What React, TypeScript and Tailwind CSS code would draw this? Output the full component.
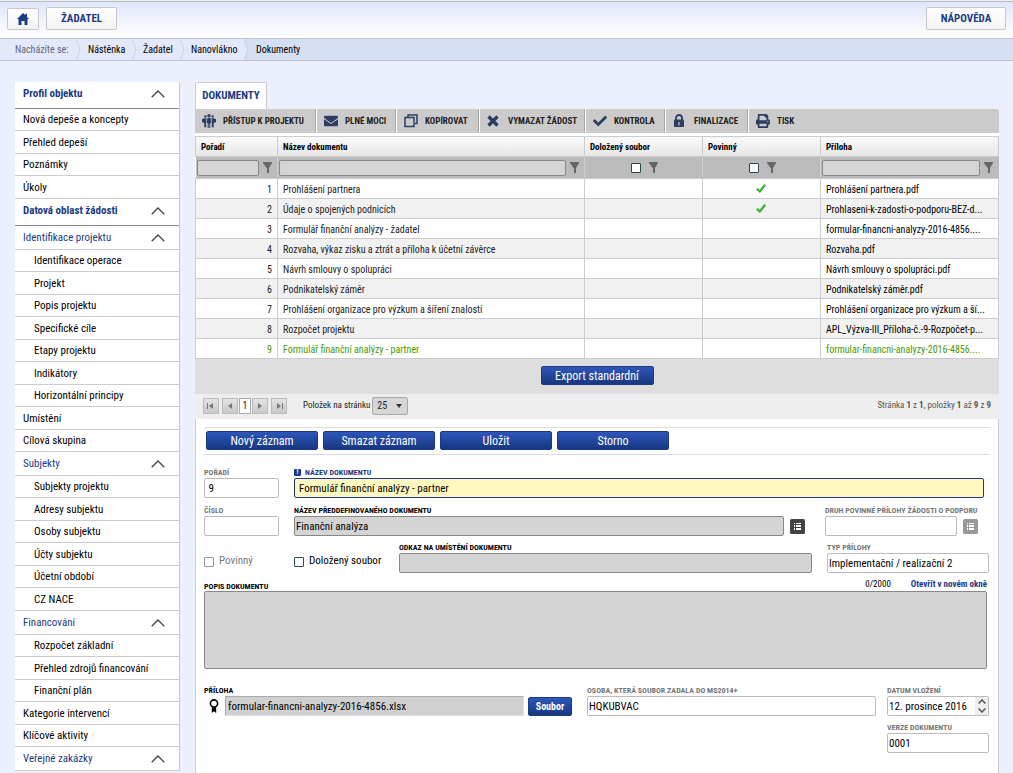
import type { ReactNode } from "react";
import clsx from "clsx";
import { FaCheck, FaEnvelope, FaPrint } from "react-icons/fa";

type MenuItem = { label: string; child?: boolean };
type MenuGroup = { title: string; main?: boolean; items: MenuItem[] };

const sub = (label: string): MenuItem => ({ label, child: true });

const menu: MenuGroup[] = [
  {
    title: "Profil objektu",
    main: true,
    items: [{ label: "Nová depeše a koncepty" }, { label: "Přehled depeší" }, { label: "Poznámky" }, { label: "Úkoly" }],
  },
  { title: "Datová oblast žádosti", main: true, items: [] },
  {
    title: "Identifikace projektu",
    items: [
      sub("Identifikace operace"),
      sub("Projekt"),
      sub("Popis projektu"),
      sub("Specifické cíle"),
      sub("Etapy projektu"),
      sub("Indikátory"),
      sub("Horizontální principy"),
      { label: "Umístění" },
      { label: "Cílová skupina" },
    ],
  },
  {
    title: "Subjekty",
    items: [
      sub("Subjekty projektu"),
      sub("Adresy subjektu"),
      sub("Osoby subjektu"),
      sub("Účty subjektu"),
      sub("Účetní období"),
      sub("CZ NACE"),
    ],
  },
  {
    title: "Financování",
    items: [
      sub("Rozpočet základní"),
      sub("Přehled zdrojů financování"),
      sub("Finanční plán"),
      { label: "Kategorie intervencí" },
      { label: "Klíčové aktivity" },
    ],
  },
  { title: "Veřejné zakázky", items: [] },
];

const rows = [
  { name: "Prohlášení partnera", required: true, file: "Prohlášení partnera.pdf" },
  { name: "Údaje o spojených podnicích", required: true, file: "Prohlaseni-k-zadosti-o-podporu-BEZ-d..." },
  { name: "Formulář finanční analýzy - žadatel", file: "formular-financni-analyzy-2016-4856...." },
  { name: "Rozvaha, výkaz zisku a ztrát a příloha k účetní závěrce", file: "Rozvaha.pdf" },
  { name: "Návrh smlouvy o spolupráci", file: "Návrh smlouvy o spolupráci.pdf" },
  { name: "Podnikatelský záměr", file: "Podnikatelský záměr.pdf" },
  { name: "Prohlášení organizace pro výzkum a šíření znalostí", file: "Prohlášení organizace pro výzkum a ší..." },
  { name: "Rozpočet projektu", file: "APL_Výzva-III_Příloha-č.-9-Rozpočet-p..." },
  { name: "Formulář finanční analýzy - partner", file: "formular-financni-analyzy-2016-4856....", active: true },
];

function PeopleIcon() {
  return (
    <svg viewBox="0 0 14 14" className="h-[14px] w-[14px]" fill="currentColor">
      <circle cx="7" cy="1.8" r="1.7" />
      <circle cx="3.4" cy="2.4" r="1.2" />
      <circle cx="10.6" cy="2.4" r="1.2" />
      <path d="M5.300 4h3.400l.4 5h-.8v5h-1v-4h-.6v4h-1V9h-.8z" />
      <path d="M2 4.200h2.500L4.200 9v4.300H2.300V9L.9 8.400 0 8V5.200zM12 4.200H9.500L9.800 9v4.300h1.900V9l1.400-.6.9-.4V5.200z" />
    </svg>
  );
}

function CopyIcon() {
  return (
    <svg viewBox="0 0 14 14" className="h-[14px] w-[14px]" fill="none" stroke="currentColor" strokeWidth="1.500">
      <path d="M4 3.500V1h9v8.500h-2.500" />
      <rect x="1" y="3.500" width="9" height="9" />
    </svg>
  );
}

function CrossIcon() {
  return (
    <svg viewBox="0 0 12 12" className="h-3 w-3" fill="none" stroke="currentColor" strokeWidth="3.400">
      <path d="m1.500 1.500 9 9M10.500 1.500l-9 9" />
    </svg>
  );
}

function LockIcon() {
  return (
    <svg viewBox="0 0 12 14" className="h-[14px] w-3" fill="currentColor">
      <path d="M3 6V4a3 3 0 0 1 6 0v2" fill="none" stroke="currentColor" strokeWidth="1.800" />
      <rect x="1" y="5.500" width="10" height="7.500" rx="1" />
      <path d="M5.400 8h1.200v3.500H5.400z" fill="#cbcbcb" />
    </svg>
  );
}

function HomeIcon() {
  return (
    <svg viewBox="0 0 12 12" className="h-3 w-3" fill="currentColor">
      <path d="M6 0 0 6h1.500v6h3V8h3v4h3V6H12l-2-2V.8H8.300v1.500z" />
    </svg>
  );
}

function Funnel() {
  return (
    <svg viewBox="0 0 9 11" className="h-[11px] w-[9px] shrink-0" fill="#666">
      <path d="M0 0h9v1L6 6v5H4V6.500L0 1z" />
    </svg>
  );
}

function GreenCheck() {
  return (
    <svg viewBox="0 0 10 9" className="mx-auto h-[9px] w-[10px]" fill="none" stroke="#2fb52f" strokeWidth="2.200">
      <path d="m.8 4.800 3 2.700 5.400-6.700" />
    </svg>
  );
}

function Chevron() {
  return (
    <svg viewBox="0 0 14 8" className="h-2 w-[14px]" fill="none" stroke="#444" strokeWidth="1.300">
      <path d="M.7 7.300 7 1l6.300 6.300" />
    </svg>
  );
}

function ListIcon() {
  return (
    <svg viewBox="0 0 15 15" className="h-[15px] w-[15px]" fill="currentColor">
      <rect width="15" height="15" rx="1.500" />
      <path fill="#fff" d="M4 4h1v1H4zM6 4h5v1H6zM4 6h1v2H4zM6 6h5v2H6zM4 9h1v2H4zM6 9h5v2H6z" />
    </svg>
  );
}

function RibbonIcon() {
  return (
    <svg viewBox="0 0 10 14" className="h-[14px] w-[10px]">
      <circle cx="5" cy="4.500" r="3.600" fill="none" stroke="#000" strokeWidth="1.600" />
      <path d="M2.800 8.300h4.400V14L5 12.200 2.800 14z" />
    </svg>
  );
}

const tools: { label: string; icon: ReactNode; width: string }[] = [
  { label: "PŘÍSTUP K PROJEKTU", icon: <PeopleIcon />, width: "w-[122px]" },
  { label: "PLNÉ MOCI", icon: <FaEnvelope size={14} />, width: "w-20" },
  { label: "KOPÍROVAT", icon: <CopyIcon />, width: "w-[83px]" },
  { label: "VYMAZAT ŽÁDOST", icon: <CrossIcon />, width: "w-[106px]" },
  { label: "KONTROLA", icon: <FaCheck size={14} />, width: "w-20" },
  { label: "FINALIZACE", icon: <LockIcon />, width: "w-[83px]" },
  { label: "TISK", icon: <FaPrint size={14} />, width: "w-20" },
];

function Sidebar() {
  return (
    <nav className="w-[165px] shrink-0 self-start border-r border-[#c8cad0] bg-white text-[11px]">
      {menu.map((group) => (
        <section key={group.title}>
          <button
            className={clsx(
              "flex w-full items-center justify-between border-b pr-[14px] pl-2 text-[#1b3a85]",
              group.main ? "h-[27px] border-[#888] pb-[2px] font-bold" : "h-6 border-[#ccc] pt-px"
            )}
          >
            {group.title}
            <Chevron />
          </button>
          <ul>
            {group.items.map((item) => (
              <li key={item.label} className="h-[22px] border-b border-[#ccc] even:h-[23px]">
                <a href="#" className={clsx("flex h-full items-center pt-[2px] text-black", item.child ? "pl-[19px]" : "pl-2")}>
                  {item.label}
                </a>
              </li>
            ))}
          </ul>
        </section>
      ))}
    </nav>
  );
}

function TextFilter({ label }: { label: string }) {
  return (
    <div className="flex items-center gap-1 pr-[5px] pl-px">
      <input aria-label={label} className="h-4 w-full min-w-0 rounded-[2px] border border-[#888] bg-[#d4d4d4]" />
      <Funnel />
    </div>
  );
}

function BoxFilter({ label }: { label: string }) {
  return (
    <div className="flex items-center justify-center gap-2 pl-[2px]">
      <CheckBox label={label} />
      <Funnel />
    </div>
  );
}

function CheckBox({ id, label, muted }: { id?: string; label?: string; muted?: boolean }) {
  return (
    <input
      id={id}
      aria-label={label}
      type="checkbox"
      className={clsx(
        "h-[10px] w-[10px] shrink-0 appearance-none rounded-[1px] border bg-white",
        muted ? "border-[#8a9a9c]" : "border-[#2a4a50]"
      )}
    />
  );
}

function DocumentsTable() {
  return (
    <table className="w-full table-fixed border-collapse text-[10px] text-[#222]">
      <colgroup>
        <col className="w-[82px]" />
        <col />
        <col className="w-[118px]" />
        <col className="w-[118px]" />
        <col className="w-[178px]" />
      </colgroup>
      <thead>
        <tr className="h-5 bg-linear-to-b from-[#fafafa] to-[#e6e6e6] text-left text-[9px] text-black">
          {["Pořadí", "Název dokumentu", "Doložený soubor", "Povinný", "Příloha"].map((head) => (
            <th key={head} className="border border-[#ccc] px-[5px] pt-[2px] pb-0 font-bold">
              {head}
            </th>
          ))}
        </tr>
        <tr className="h-[22px] bg-[#bbb]">
          <td className="border-r border-[#ccc] p-0"><TextFilter label="Filtr pořadí" /></td>
          <td className="border-r border-[#ccc] p-0"><TextFilter label="Filtr názvu" /></td>
          <td className="border-r border-[#ccc] p-0"><BoxFilter label="Filtr doložený soubor" /></td>
          <td className="border-r border-[#ccc] p-0"><BoxFilter label="Filtr povinný" /></td>
          <td className="p-0 pr-px"><TextFilter label="Filtr přílohy" /></td>
        </tr>
      </thead>
      <tbody>
        {rows.map((row, i) => (
          <tr
            key={row.name}
            className={clsx("h-5 leading-4", i % 2 ? "bg-[#f1f1f1]" : "bg-white", row.active ? "text-[#4c9a00]" : "text-[#222]")}
          >
            <td className="border border-[#ccc] px-[5px] pt-[2px] pb-0 text-right">{i + 1}</td>
            <td className="border border-[#ccc] px-[5px] pt-[2px] pb-0">{row.name}</td>
            <td className="border border-[#ccc] p-0" />
            <td className="border border-[#ccc] p-0 pr-[2px]">{row.required && <GreenCheck />}</td>
            <td
              className={clsx(
                "overflow-hidden border border-[#ccc] px-[5px] pt-[2px] pb-0 whitespace-nowrap",
                !row.active && "text-black"
              )}
            >
              {row.file}
            </td>
          </tr>
        ))}
      </tbody>
    </table>
  );
}

function PageButton({ label, first, last, next }: { label: string; first?: boolean; last?: boolean; next?: boolean }) {
  return (
    <button
      aria-label={label}
      className="flex h-4 w-4 items-center justify-center border border-[#bbb] bg-linear-to-b from-[#e4e4e4] to-[#c8c8c8]"
    >
      <svg viewBox="0 0 8 8" className="h-2 w-2" fill="#777">
        {first && <path d="M0 1h1v6H0z" />}
        {last && <path d="M7 1h1v6H7z" />}
        <path d={next ? "M2 1l4 3-4 3z" : "M6 1 2 4l4 3z"} />
      </svg>
    </button>
  );
}

function Pager() {
  return (
    <div className="flex h-[25px] items-center justify-between bg-[#eee] pr-2 pb-px pl-2 text-[9px] text-[#222]">
      <div className="flex items-center">
        <div className="flex items-center gap-[3px]">
          <PageButton label="První" first />
          <div className="flex gap-px">
            <PageButton label="Předchozí" />
            <button className="h-4 w-3 border border-[#aaa] bg-white text-[10px] leading-3">1</button>
            <PageButton label="Další" next />
          </div>
          <PageButton label="Poslední" last next />
        </div>
        <label htmlFor="page-size" className="ml-4">
          Položek na stránku
        </label>
        <div className="relative ml-[2px]">
          <select
            id="page-size"
            className="h-[18px] w-9 appearance-none rounded-[2px] border border-[#aaa] bg-[#d6d6d6] pl-1 text-[10px] leading-3"
          >
            <option>25</option>
          </select>
          <span className="pointer-events-none absolute top-[7px] right-[6px] border-x-[3px] border-t-4 border-x-transparent border-t-[#333]" />
        </div>
      </div>
      <p className="text-[#555]">
        Stránka <b>1</b> z <b>1</b>, položky <b>1</b> až <b>9</b> z <b>9</b>
      </p>
    </div>
  );
}

type FieldProps = {
  id: string;
  label: string;
  value?: string;
  kind?: "plain" | "filled" | "required" | "file";
  muted?: boolean;
  className?: string;
  after?: ReactNode;
};

const kinds = {
  plain: "rounded-[2px] border border-[#bbb] bg-white px-px",
  filled: "rounded-[2px] border border-[#888] bg-[#d4d4d4] px-px",
  required: "rounded-[2px] border border-[#1b3a85] bg-[#fff8bf] px-1",
  file: "border border-[#aaa] border-r-[#e0e0e0] border-b-[#e0e0e0] bg-[#d0d0d0] px-[2px]",
};

function Field({ id, label, value, kind = "plain", muted, className, after }: FieldProps) {
  return (
    <div className={className}>
      <label
        htmlFor={id}
        className={clsx(
          "flex h-[11px] items-center gap-1 text-[8px] font-bold whitespace-nowrap",
          kind === "required" ? "text-[#1b3a85]" : muted ? "text-[#777]" : "text-black"
        )}
      >
        {kind === "required" && (
          <span className="flex h-[7px] w-[7px] items-center justify-center rounded-[1px] bg-[#1b3a85] text-[7px] leading-none text-white">!</span>
        )}
        {label}
      </label>
      <div className="flex items-center gap-[6px]">
        <input id={id} defaultValue={value} className={clsx("h-5 w-full min-w-0 text-[11px] text-black", kinds[kind])} />
        {after}
      </div>
    </div>
  );
}

const blueButton =
  "rounded-[2px] border border-[#1b3a85] bg-linear-to-b from-[#2d57bb] to-[#183780] text-white";

function DocumentForm() {
  return (
    <form className="flex-1 border-x border-[#ccc] bg-white pt-2 pr-2 pl-2" onSubmit={(e) => e.preventDefault()}>
      <div className="flex h-7 items-center gap-[5px] border-y border-[#ddd] pb-px pl-[2px]">
        {["Nový záznam", "Smazat záznam", "Uložit", "Storno"].map((label) => (
          <button key={label} className={clsx("h-[19px] w-28 pt-px text-[12px] leading-4", blueButton)}>
            {label}
          </button>
        ))}
      </div>

      <div className="mt-3 flex gap-[15px] pr-[6px]">
        <Field id="order" label="POŘADÍ" value=" 9" muted className="w-[75px]" />
        <Field id="name" label="NÁZEV DOKUMENTU" value="Formulář finanční analýzy - partner" kind="required" className="flex-1" />
      </div>

      <div className="mt-[7px] flex pr-3">
        <Field id="number" label="ČÍSLO" muted className="w-[75px]" />
        <Field
          id="template"
          label="NÁZEV PŘEDDEFINOVANÉHO DOKUMENTU"
          value="Finanční analýza"
          kind="filled"
          className="ml-[15px] flex-1"
          after={<button type="button" aria-label="Vybrat dokument" className="text-[#444]"><ListIcon /></button>}
        />
        <Field
          id="attachment-kind"
          label="DRUH POVINNÉ PŘÍLOHY ŽÁDOSTI O PODPORU"
          muted
          className="ml-5 w-[153px]"
          after={<button type="button" aria-label="Vybrat druh přílohy" className="text-[#999]"><ListIcon /></button>}
        />
      </div>

      <div className="mt-[6px] flex pr-px text-[11px]">
        <div className="mt-2 flex w-[90px] items-center gap-[5px] text-[#777]">
          <CheckBox id="mandatory" muted />
          <label htmlFor="mandatory">Povinný</label>
        </div>
        <div className="mt-2 flex w-[105px] items-center gap-[5px] text-black">
          <CheckBox id="supplied" />
          <label htmlFor="supplied">Doložený soubor</label>
        </div>
        <Field id="location" label="ODKAZ NA UMÍSTĚNÍ DOKUMENTU" kind="filled" className="flex-1" />
        <Field id="type" label="TYP PŘÍLOHY" value="Implementační / realizační 2" muted className="ml-[15px] w-[162px]" />
      </div>

      <div className="mt-[5px] pr-[3px]">
        <div className="flex h-[13px] items-center">
          <label htmlFor="description" className="mt-1 flex-1 text-[8px] font-bold text-black">
            POPIS DOKUMENTU
          </label>
          <span className="mr-5 text-[9px] text-black">0/2000</span>
          <a href="#" className="text-[9px] font-bold text-[#1b3a85]">
            Otevřít v novém okně
          </a>
        </div>
        <textarea id="description" className="block h-[78px] w-full resize-none rounded-[2px] border border-[#888] bg-[#d4d4d4]" />
      </div>

      <div className="mt-4 flex pr-px">
        <div className="mr-[15px] w-[368px]">
          <label htmlFor="file" className="flex h-[11px] items-center text-[8px] font-bold text-black">
            PŘÍLOHA
          </label>
          <div className="flex items-center pl-[5px]">
            <RibbonIcon />
            <input
              id="file"
              defaultValue="formular-financni-analyzy-2016-4856.xlsx"
              className={clsx("ml-[6px] h-5 min-w-0 flex-1 text-[11px] text-black", kinds.file)}
            />
            <button className={clsx("ml-1 h-[19px] w-11 pt-px text-[10px] leading-4 font-bold", blueButton)}>Soubor</button>
          </div>
        </div>
        <Field id="person" label="OSOBA, KTERÁ SOUBOR ZADALA DO MS2014+" value="HQKUBVAC" muted className="flex-1" />
        <div className="ml-[11px] flex w-[102px] flex-col gap-[6px]">
          <div className="relative">
            <Field id="date" label="DATUM VLOŽENÍ" value="12. prosince 2016" muted />
            <div className="absolute right-px bottom-px flex h-[18px] w-[13px] flex-col items-center justify-around bg-[#eee]">
              <button type="button" aria-label="Zvýšit datum">
                <svg viewBox="0 0 8 5" className="h-[5px] w-2" fill="none" stroke="#555" strokeWidth="1.500"><path d="M.5 4.500 4 1l3.500 3.500" /></svg>
              </button>
              <button type="button" aria-label="Snížit datum">
                <svg viewBox="0 0 8 5" className="h-[5px] w-2" fill="none" stroke="#555" strokeWidth="1.500"><path d="M.5.5 4 4 7.500.5" /></svg>
              </button>
            </div>
          </div>
          <Field id="version" label="VERZE DOKUMENTU" value="0001" muted />
        </div>
      </div>
    </form>
  );
}

function Header() {
  const topButton =
    "flex items-center justify-center rounded-[2px] border border-[#c8c8c8] bg-linear-to-b from-white to-[#f3f3f3] text-[11px] font-bold text-[#1b3a85]";
  return (
    <header className="mt-px flex h-[37px] items-center gap-[7px] border-t border-[#bbb] bg-linear-to-b from-[#e0e7fb] to-white px-[7px] pb-[3px]">
      <button aria-label="Domů" className={clsx("h-[22px] w-8", topButton)}>
        <HomeIcon />
      </button>
      <button className={clsx("h-[23px] w-[71px] pt-[2px]", topButton)}>ŽADATEL</button>
      <button className={clsx("ml-auto h-[23px] w-20 pt-[2px]", topButton)}>NÁPOVĚDA</button>
    </header>
  );
}

function Separator({ fill }: { fill?: string }) {
  return (
    <svg viewBox="0 0 5 22" className="h-[22px] w-[5px]" fill={fill ?? "none"} stroke="#c8d0e4">
      <path d="M0 0 4 11 0 22" />
    </svg>
  );
}

function Breadcrumbs() {
  return (
    <nav className="flex h-[23px] items-center border-y border-[#bcc5da] bg-[#d5def2] text-[10px] leading-[22px] text-black">
      <div className="flex h-full items-center bg-[#e3e9fb]">
        <span className="w-[76px] pl-[15px] text-[#667]">Nacházíte se:</span>
        <Separator />
        <a href="#" className="w-[51px] pl-[7px]">Nástěnka</a>
        <Separator />
        <a href="#" className="w-[43px] pl-[6px]">Žadatel</a>
        <Separator />
        <a href="#" className="w-[59px] pl-[6px]">Nanovlákno</a>
      </div>
      <Separator fill="#e3e9fb" />
      <a href="#" className="pl-[7px]">Dokumenty</a>
    </nav>
  );
}

export default function App() {
  return (
    <div className="flex min-h-screen flex-col bg-[#ecf0fd] font-['Roboto_Condensed','Liberation_Sans_Narrow',Roboto,sans-serif]">
      <Header />
      <Breadcrumbs />
      <div className="flex flex-1 gap-[15px] pt-[21px] pr-[14px] pl-[15px]">
        <Sidebar />
        <main className="flex min-w-0 flex-1 flex-col">
          <div className="flex">
            <button className="h-[27px] w-[72px] rounded-t-[2px] border border-b-0 border-[#ccc] bg-white pt-px text-[11px] font-bold text-[#1b3a85]">
              DOKUMENTY
            </button>
          </div>
          <div className="flex h-6 rounded-tr-[2px] bg-[#cbcbcb] text-[9px] font-bold text-[#222]">
            {tools.map((tool) => (
              <button
                key={tool.label}
                className={clsx(
                  "flex items-center border-r border-white pl-[7px] whitespace-nowrap shadow-[inset_-1px_0_#aaa] last:border-r-0 last:shadow-none",
                  tool.width
                )}
              >
                <span className="w-[21px] text-[#2c3f63]">{tool.icon}</span>
                <span className="pt-px">{tool.label}</span>
              </button>
            ))}
          </div>
          <div className="bg-white pt-[3px]">
            <DocumentsTable />
          </div>
          <div className="flex h-[35px] items-center justify-center bg-[#dedede] pb-[2px]">
            <button className={clsx("h-[19px] w-[113px] text-[12px] leading-4", blueButton)}>Export standardní</button>
          </div>
          <Pager />
          <DocumentForm />
        </main>
      </div>
    </div>
  );
}
